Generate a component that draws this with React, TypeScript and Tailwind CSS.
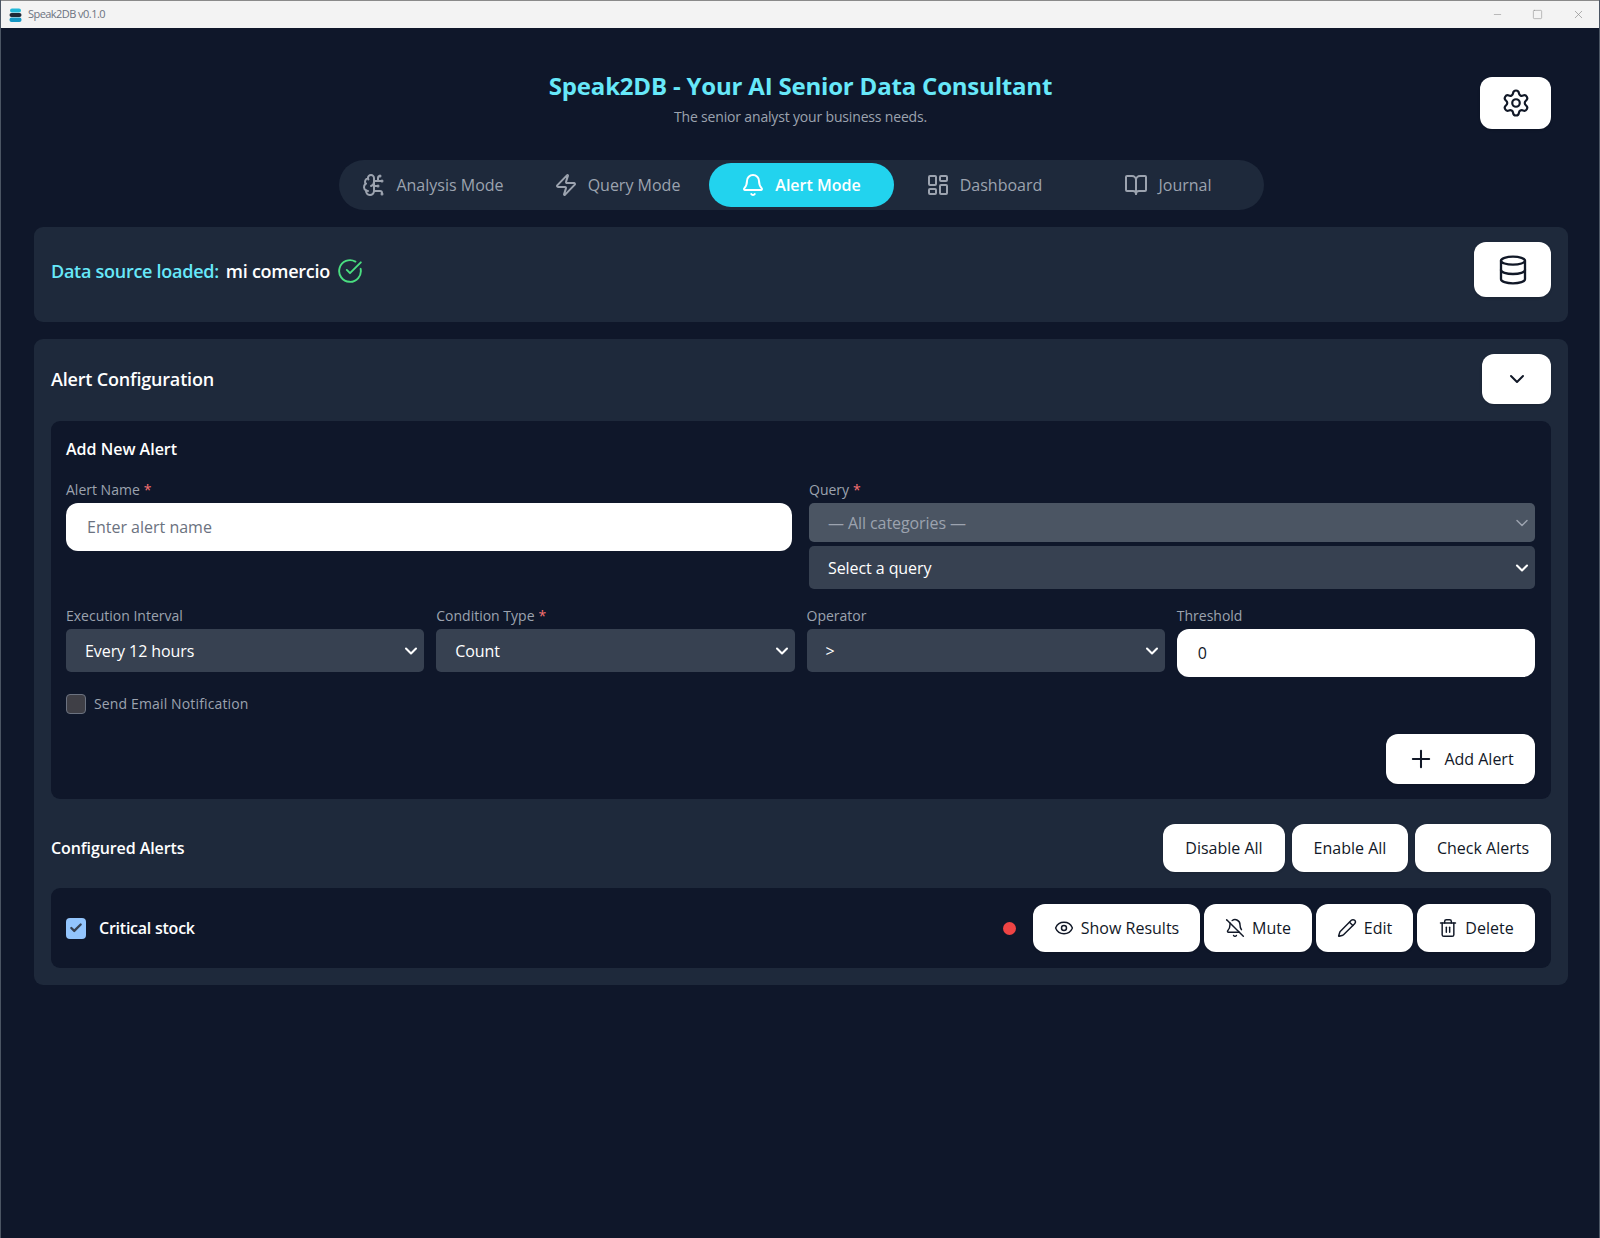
import {
  Bell,
  BellOff,
  BookOpen,
  BrainCircuit,
  Check,
  ChevronDown,
  CircleCheckBig,
  Database,
  Eye,
  LayoutDashboard,
  Minus,
  Pencil,
  Plus,
  Settings,
  Square,
  Trash2,
  X,
  Zap,
} from 'lucide-react';
import type { ReactNode } from 'react';

const font = "font-['Open_Sans','Noto_Sans',sans-serif]";

// Small stacked-disk logo in the title bar
function AppLogo() {
  return (
    <svg width="13" height="14" viewBox="0 0 13 14">
      <rect x="1" y="0.5" width="11" height="4" rx="2" fill="#22b8d8" />
      <rect x="0.5" y="5" width="12" height="4" rx="2" fill="#1f2937" />
      <rect x="0.5" y="9.5" width="12" height="4.5" rx="2" fill="#1597c4" />
    </svg>
  );
}

function TitleBar() {
  return (
    <div className="flex h-[28px] shrink-0 items-center border-t border-[#8a8a8a] bg-[#f3f3f3] pl-[8px]">
      <AppLogo />
      <span className="ml-[6px] text-[11px] tracking-[-0.05em] text-[#6b7280]">Speak2DB v0.1.0</span>
      <div className="ml-auto flex items-center gap-[29px] pr-[14px] text-[#8c8c8c]">
        <Minus size={11} strokeWidth={1.25} />
        <Square size={11} strokeWidth={1.25} />
        <X size={13} strokeWidth={1.25} />
      </div>
    </div>
  );
}

function Tab({ icon, label, active, className }: { icon: ReactNode; label: string; active?: boolean; className: string }) {
  return (
    <div
      className={`flex h-[44px] items-center justify-center gap-[10px] rounded-[22px] text-[16px] ${className} ${
        active ? 'bg-[#22d3ee] font-semibold text-white' : 'font-medium text-[#9ca3af]'
      }`}
    >
      {icon}
      <span>{label}</span>
    </div>
  );
}

function WhiteButton({ className = '', children }: { className?: string; children: ReactNode }) {
  return (
    <button
      type="button"
      className={`flex items-center justify-center rounded-[12px] bg-white text-[16px] font-medium text-[#111827] shadow-sm ${className}`}
    >
      {children}
    </button>
  );
}

function FieldLabel({ text, required }: { text: string; required?: boolean }) {
  return (
    <label className="block h-[20px] text-[14px] leading-[20px] font-medium text-[#9ca3af]">
      {text}
      {required && <span className="ml-[4px] text-[#f87171]">*</span>}
    </label>
  );
}

function SelectBox({ value, disabled, className = 'h-[43px]' }: { value: string; disabled?: boolean; className?: string }) {
  return (
    <div
      className={`flex items-center justify-between rounded-[5px] pr-[3px] pl-[19px] text-[16px] tracking-[-0.005em] ${className} ${
        disabled ? 'bg-[#4b5563] text-[#9ca3af]' : 'bg-[#374151] text-white'
      }`}
    >
      <span>{value}</span>
      <ChevronDown size={20} strokeWidth={disabled ? 1.75 : 2.5} className={disabled ? 'text-[#9ca3af]' : 'text-white'} />
    </div>
  );
}

function AddAlertForm() {
  return (
    <div className="mt-[17px] rounded-[9px] bg-[#0f172a] pt-[16px] pr-[16px] pb-[15px] pl-[15px]">
      <h3 className="h-[24px] text-[16px] leading-[24px] font-semibold text-white">Add New Alert</h3>
      <div className="mt-[19px] grid grid-cols-2 gap-x-[17px]">
        <div>
          <FieldLabel text="Alert Name" required />
          <input
            className="mt-[3px] h-[48px] w-full rounded-[12px] bg-white px-[21px] text-[16px] text-[#111827] outline-none placeholder:text-[#6b7280]"
            placeholder="Enter alert name"
          />
        </div>
        <div>
          <FieldLabel text="Query" required />
          <div className="mt-[3px] flex flex-col gap-[4px]">
            <SelectBox value="— All categories —" disabled className="h-[39px]" />
            <SelectBox value="Select a query" />
          </div>
        </div>
      </div>
      <div className="mt-[17px] grid grid-cols-4 gap-x-[12px]">
        <div>
          <FieldLabel text="Execution Interval" />
          <div className="mt-[3px]"><SelectBox value="Every 12 hours" /></div>
        </div>
        <div>
          <FieldLabel text="Condition Type" required />
          <div className="mt-[3px]"><SelectBox value="Count" /></div>
        </div>
        <div>
          <FieldLabel text="Operator" />
          <div className="mt-[3px]"><SelectBox value=">" /></div>
        </div>
        <div>
          <FieldLabel text="Threshold" />
          <input
            className="mt-[3px] h-[48px] w-full rounded-[12px] bg-white px-[21px] text-[16px] text-[#111827] outline-none"
            defaultValue="0"
          />
        </div>
      </div>
      <div className="mt-[16px] flex items-center gap-[8px]">
        <span className="h-[20px] w-[20px] rounded-[4px] border border-[#6b7280] bg-[#3f3f46]" />
        <span className="text-[14px] font-medium tracking-[0.01em] text-[#9ca3af]">Send Email Notification</span>
      </div>
      <div className="mt-[20px] flex justify-end">
        <WhiteButton className="h-[50px] w-[149px] gap-[9px]">
          <Plus size={28} strokeWidth={1.75} />
          Add Alert
        </WhiteButton>
      </div>
    </div>
  );
}

function ConfiguredAlerts() {
  return (
    <>
      <div className="mt-[25px] flex items-center justify-between">
        <h3 className="text-[16px] font-semibold tracking-[-0.005em] text-white">Configured Alerts</h3>
        <div className="flex gap-[7px]">
          <WhiteButton className="h-[48px] w-[122px]">Disable All</WhiteButton>
          <WhiteButton className="h-[48px] w-[116px]">Enable All</WhiteButton>
          <WhiteButton className="h-[48px] w-[136px]">Check Alerts</WhiteButton>
        </div>
      </div>
      <div className="mt-[16px] flex h-[80px] items-center rounded-[9px] bg-[#0f172a] pr-[16px] pl-[15px]">
        <span className="flex h-[21px] w-[20px] items-center justify-center rounded-[4px] bg-[#93c5fd]">
          <Check size={14} strokeWidth={4} className="text-[#374151]" />
        </span>
        <span className="ml-[13px] text-[16px] font-semibold tracking-[-0.015em] text-white">Critical stock</span>
        <span className="ml-auto h-[13px] w-[13px] rounded-full bg-[#ef4444]" />
        <div className="ml-[17px] flex gap-[4px]">
          <WhiteButton className="h-[48px] w-[167px] gap-[7px]">
            <Eye size={20} strokeWidth={1.75} />
            Show Results
          </WhiteButton>
          <WhiteButton className="h-[48px] w-[108px] gap-[7px]">
            <BellOff size={20} strokeWidth={1.75} />
            Mute
          </WhiteButton>
          <WhiteButton className="h-[48px] w-[97px] gap-[7px]">
            <Pencil size={20} strokeWidth={1.75} />
            Edit
          </WhiteButton>
          <WhiteButton className="h-[48px] w-[118px] gap-[7px]">
            <Trash2 size={20} strokeWidth={1.75} />
            Delete
          </WhiteButton>
        </div>
      </div>
    </>
  );
}

export default function App() {
  return (
    <div className={`flex h-[1238px] flex-col overflow-hidden border-x border-[#4b5563] bg-[#0f172a] ${font}`}>
      <TitleBar />
      <main className="flex-1 pt-[49px] pr-[31px] pl-[33px]">
        {/* Header */}
        <header className="grid grid-cols-[1fr_auto_1fr] pr-[17px] pl-[16px]">
          <div />
          <div className="-mt-px flex flex-col items-center">
            <h1 className="h-[28px] text-[24px] leading-[20px] font-bold tracking-[-0.008em] text-[#67e8f9]">
              Speak2DB - Your AI Senior Data Consultant
            </h1>
            <p className="mt-[2px] text-[14px] tracking-[-0.012em] text-[#9ca3af]">The senior analyst your business needs.</p>
          </div>
          <div className="flex justify-end">
            <WhiteButton className="h-[52px] w-[71px]">
              <Settings size={30} strokeWidth={1.75} />
            </WhiteButton>
          </div>
        </header>

        {/* Mode tabs */}
        <div className="mt-[31px] flex justify-center">
          <nav className="grid h-[50px] w-[925px] grid-cols-5 items-center rounded-[25px] bg-[#1e293b]">
            <Tab icon={<BrainCircuit size={24} strokeWidth={2} />} label="Analysis Mode" className="pl-[4px]" />
            <Tab icon={<Zap size={24} strokeWidth={2} />} label="Query Mode" className="pl-[2px]" />
            <Tab icon={<Bell size={24} strokeWidth={2} />} label="Alert Mode" active className="" />
            <Tab icon={<LayoutDashboard size={24} strokeWidth={2} />} label="Dashboard" className="pr-[4px]" />
            <Tab icon={<BookOpen size={24} strokeWidth={2} />} label="Journal" className="pr-[6px]" />
          </nav>
        </div>

        {/* Data source */}
        <section className="mt-[17px] flex h-[95px] items-start justify-between rounded-[9px] bg-[#1e293b] pt-[15px] pr-[17px] pl-[17px]">
          <div className="mt-[16px] flex items-center text-[18px] font-semibold tracking-[-0.015em]">
            <span className="text-[#67e8f9]">Data source loaded:</span>
            <span className="ml-[7px] text-white">mi comercio</span>
            <CircleCheckBig size={26} strokeWidth={1.75} className="ml-[7px] -translate-y-px text-[#4ade80]" />
          </div>
          <WhiteButton className="h-[55px] w-[77px]">
            <Database size={32} strokeWidth={1.75} />
          </WhiteButton>
        </section>

        {/* Alert configuration */}
        <section className="mt-[17px] rounded-[9px] bg-[#1e293b] pt-[15px] pr-[17px] pb-[17px] pl-[17px]">
          <div className="flex items-center justify-between">
            <h2 className="text-[18px] font-semibold tracking-[-0.01em] text-white">Alert Configuration</h2>
            <WhiteButton className="h-[50px] w-[69px]">
              <ChevronDown size={24} strokeWidth={2} />
            </WhiteButton>
          </div>
          <AddAlertForm />
          <ConfiguredAlerts />
        </section>
      </main>
    </div>
  );
}
